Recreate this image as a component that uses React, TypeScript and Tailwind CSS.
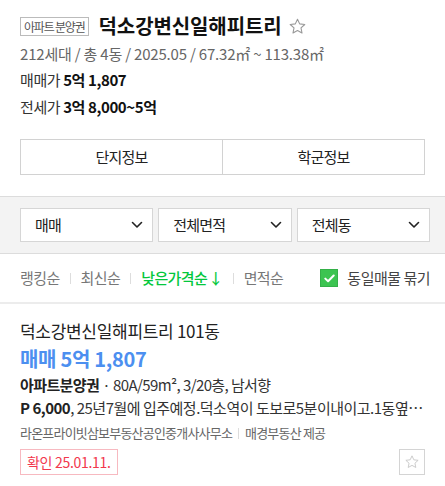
import React from 'react'

const font = "font-['Malgun_Gothic','Noto_Sans_CJK_KR','Noto_Sans',sans-serif]"

function Star({ size, color }: { size: number; color: string }) {
  return (
    <svg width={size} height={size} viewBox="0 0 24 24" fill="none">
      <path
        d="M12 2.8l2.75 5.9 6.45.75-4.78 4.4 1.27 6.37L12 17.05 6.31 20.22l1.27-6.37L2.8 9.45l6.45-.75L12 2.8z"
        stroke={color}
        strokeWidth="1.4"
        strokeLinejoin="round"
      />
    </svg>
  )
}

function Chevron() {
  return (
    <svg width="12" height="8" viewBox="0 0 12 8" fill="none">
      <path d="M1.5 1.5L6 6l4.5-4.5" stroke="#222" strokeWidth="1.6" strokeLinecap="round" strokeLinejoin="round" />
    </svg>
  )
}

function Select({ label }: { label: string }) {
  return (
    <div className="flex-1 h-[34px] bg-white border border-[#d6d6d6] flex items-center justify-between pl-[14px] pr-[9px]">
      <span className="text-[15px] text-[#222] tracking-[-0.8px]">{label}</span>
      <Chevron />
    </div>
  )
}

const sorts = ['랭킹순', '최신순', '낮은가격순', '면적순']

export default function App() {
  return (
    <div className={`w-[445px] h-[486px] bg-white overflow-hidden ${font}`}>
      <div className="px-5 pt-[14px]">
        <div className="flex items-center h-[24px]">
          <span className="h-[19px] px-[3px] border border-[#bbb] text-[12px] leading-[17px] text-[#555] tracking-[-1.2px]">
            아파트 분양권
          </span>
          <h1 className="ml-[10px] text-[20px] font-bold text-[#111] tracking-[-0.1px] leading-[24px]">덕소강변신일해피트리</h1>
          <span className="ml-[6px] mt-[1px]">
            <Star size={19} color="#999" />
          </span>
        </div>
        <div className="mt-[6px] h-[20px] flex items-center text-[15px] text-[#666] tracking-[-0.2px]">
          212세대 / 총 4동 / 2025.05 / 67.32㎡ ~ 113.38㎡
        </div>
        <div className="mt-[6px] h-[20px] flex items-center text-[15px] text-[#333] tracking-[-0.4px]">
          매매가&nbsp;<b className="text-[#111]">5억 1,807</b>
        </div>
        <div className="mt-[7px] h-[20px] flex items-center text-[15px] text-[#333] tracking-[-0.4px]">
          전세가&nbsp;<b className="text-[#111]">3억 8,000~5억</b>
        </div>
        <div className="mt-[22px] flex h-[36px] border border-[#d2d2d2]">
          <div className="flex-1 flex items-center justify-center text-[15px] text-[#222] tracking-[-0.8px] border-r border-[#d2d2d2]">
            단지정보
          </div>
          <div className="flex-1 flex items-center justify-center text-[15px] text-[#222] tracking-[-0.8px]">학군정보</div>
        </div>
      </div>

      <div className="mt-[21px] border-y border-[#dcdcdc] bg-[#f3f3f3] pl-5 pr-[15px] pt-[11px] pb-[11px] flex gap-[5px]">
        <Select label="매매" />
        <Select label="전체면적" />
        <Select label="전체동" />
      </div>

      <div className="h-[48px] pl-5 pr-[15px] flex items-center justify-between">
        <div className="flex items-center text-[15px] tracking-[-0.6px]">
          {sorts.map((s, i) => (
            <React.Fragment key={s}>
              {i > 0 && <span className="mx-[10px] w-px h-[11px] bg-[#ddd]" />}
              {s === '낮은가격순' ? (
                <span className="text-[#03c73c] font-medium">
                  {s}
                  <span className="ml-[1px]">↓</span>
                </span>
              ) : (
                <span className="text-[#777]">{s}</span>
              )}
            </React.Fragment>
          ))}
        </div>
        <div className="flex items-center">
          <span className="w-[18px] h-[18px] bg-[#3cc451] border border-[#34b048] flex items-center justify-center">
            <svg width="11" height="9" viewBox="0 0 11 9" fill="none">
              <path d="M1.3 4.6L4.1 7.3 9.7 1.5" stroke="#fff" strokeWidth="2" strokeLinecap="round" strokeLinejoin="round" />
            </svg>
          </span>
          <span className="ml-[9px] text-[15px] text-[#444] tracking-[-0.5px]">동일매물 묶기</span>
        </div>
      </div>

      <div className="h-[2px] bg-[#ececec]" />

      <div className="px-5 pt-[16px]">
        <div className="h-[22px] flex items-center text-[17px] text-[#222] tracking-[-0.3px]">덕소강변신일해피트리 101동</div>
        <div className="mt-[4px] h-[26px] flex items-center text-[20px] font-bold text-[#4c8ff0] tracking-[-0.3px]">
          매매 5억 1,807
        </div>
        <div className="mt-[3px] h-[20px] flex items-center text-[15px] text-[#333] tracking-[-0.6px]">
          <b className="text-[#222]">아파트분양권</b>
          <span className="mx-[3px]">·</span>80A/59m², 3/20층, 남서향
        </div>
        <div className="mt-[3px] h-[20px] flex items-center text-[15px] text-[#333] tracking-[-0.5px] whitespace-nowrap overflow-hidden">
          <span className="truncate">
            <b className="text-[#222] font-semibold">P 6,000</b>, 25년7월에 입주예정.덕소역이 도보로5분이내이고.1동옆…
          </span>
        </div>
        <div className="mt-[6px] h-[18px] flex items-center text-[13px] text-[#666] tracking-[-0.8px]">
          라온프라이빗삼보부동산공인중개사사무소
          <span className="mx-[6px] w-px h-[11px] bg-[#ddd]" />
          매경부동산 제공
        </div>
        <div className="mt-[7px] flex items-center justify-between">
          <span className="h-[26px] px-[6px] border border-[#f7b9c0] flex items-center text-[14px] text-[#f2384d] tracking-[-0.3px]">
            확인 25.01.11.
          </span>
          <span className="w-[26px] h-[26px] border border-[#d4d4d4] flex items-center justify-center">
            <Star size={16} color="#c8c8c8" />
          </span>
        </div>
      </div>
    </div>
  )
}
